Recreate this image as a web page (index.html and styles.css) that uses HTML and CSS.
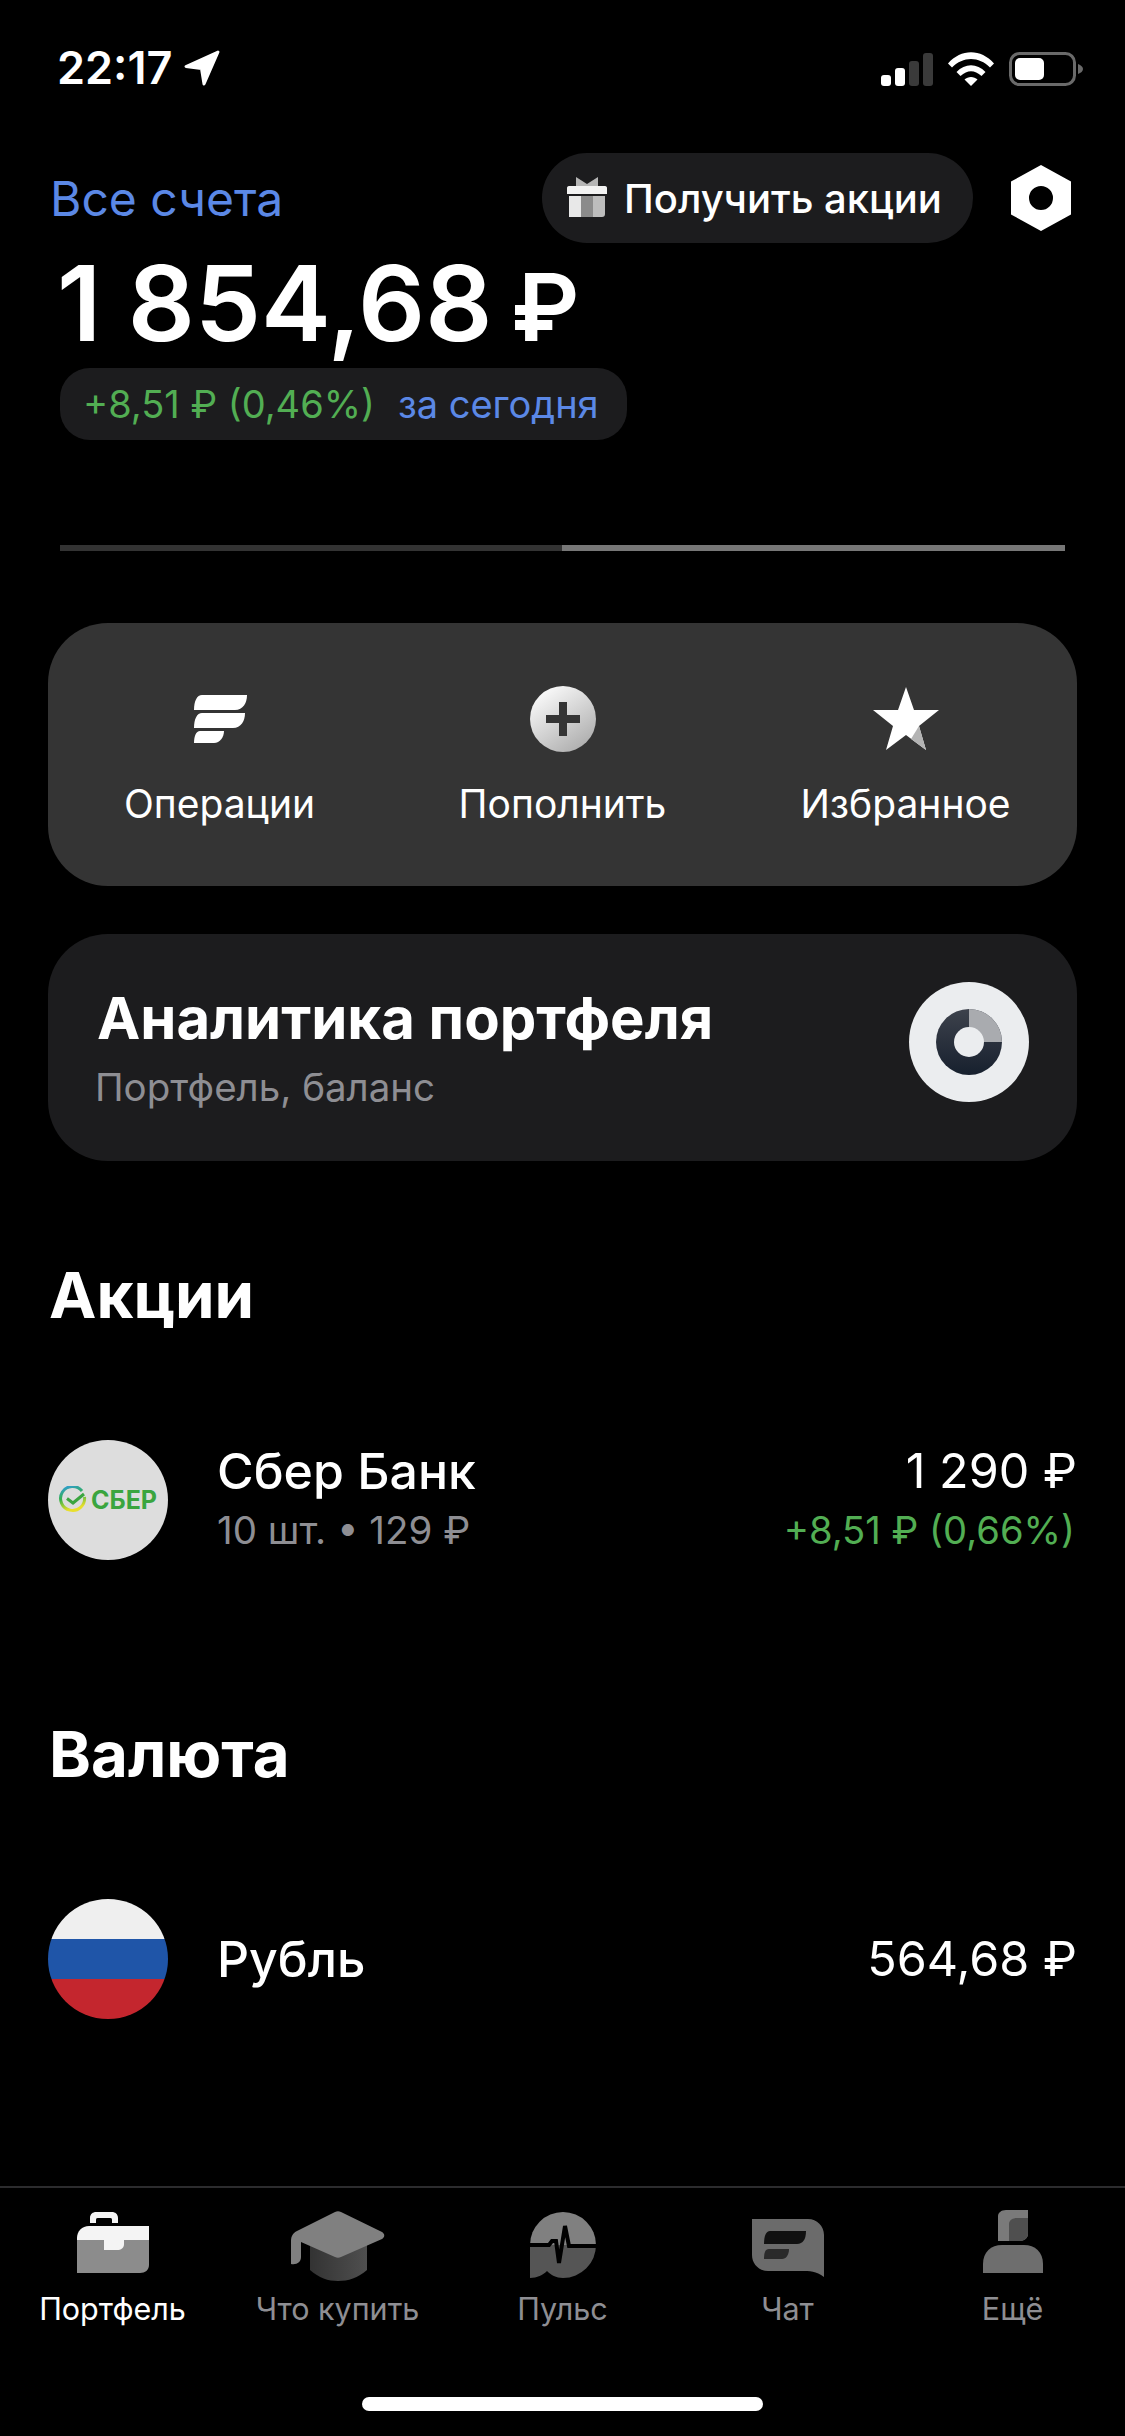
FILE: index.html
```html
<!DOCTYPE html>
<html lang="ru">
<head>
    <meta charset="UTF-8">
    <meta name="viewport" content="width=device-width, initial-scale=1.0">
    <title>Портфель</title>
    <link rel="stylesheet" href="styles.css">
</head>
<body>
    <div class="screen">
        <header class="status">
            <div class="status-left">
                <span class="time">22:17</span>
                <svg class="loc" width="36" height="36" viewBox="0 0 36 36"><path d="M34 2 2 16.500 17.500 18.500 20 34Z" fill="#fff" stroke="#fff" stroke-width="3" stroke-linejoin="round"/></svg>
            </div>
            <div class="status-right">
                <svg width="52" height="33" viewBox="0 0 52 33">
                    <rect x="0" y="22" width="10" height="11" rx="3" fill="#fff"/>
                    <rect x="14" y="15" width="10" height="18" rx="3" fill="#fff"/>
                    <rect x="28" y="8" width="10" height="25" rx="3" fill="#3a3a3a"/>
                    <rect x="42" y="0" width="10" height="33" rx="3" fill="#3a3a3a"/>
                </svg>
                <svg width="46" height="34" viewBox="0 0 46 34">
                    <path d="M0 11.500C13 -3.500 33 -3.500 46 11.500L42 15.500C31 4 15 4 4 15.500Z" fill="#fff"/>
                    <path d="M8.500 20C17 11 29 11 37.500 20L33.500 24C26.500 17.500 19.500 17.500 12.500 24Z" fill="#fff"/>
                    <path d="M16.500 27.500C20 24 26 24 29.500 27.500L23 34Z" fill="#fff"/>
                </svg>
                <svg width="74" height="34" viewBox="0 0 74 34">
                    <rect x="1.500" y="1.500" width="64" height="31" rx="9" fill="none" stroke="#6a6a6a" stroke-width="3"/>
                    <rect x="6" y="6" width="29" height="22" rx="5" fill="#fff"/>
                    <path d="M69 12C72 13 74 15 74 17C74 19 72 21 69 22Z" fill="#6a6a6a"/>
                </svg>
            </div>
        </header>

        <section class="account">
            <div class="account-top">
                <span class="account-name">Все счета</span>
                <div class="account-actions">
                    <div class="promo">
                        <svg width="42" height="42" viewBox="0 0 42 42">
                            <path d="M10 0 21 7 32 0V9H10Z" fill="#b5b5b5"/>
                            <path d="M3 9C1.500 9 1 10 1 11V17H41V11C41 10 40.500 9 39 9Z" fill="#f2f2f2"/>
                            <path d="M3 19H15V40H3Z" fill="#e8e8e8"/>
                            <path d="M27 19H39V37C39 39 38 40 36 40H27Z" fill="#bdbdbd"/>
                            <path d="M15 19H27V40H15Z" fill="#8b8b8b"/>
                        </svg>
                        <span>Получить акции</span>
                    </div>
                    <svg width="62" height="66" viewBox="0 0 62 66"><path fill-rule="evenodd" d="M31 0 61 16.500V49.500L31 66 1 49.500V16.500ZM31 21A12 12 0 1 0 31 45 12 12 0 1 0 31 21Z" fill="#fff"/></svg>
                </div>
            </div>
            <div class="amount">1 854,68<span class="amount-sign"> ₽</span></div>
            <div class="change"><span class="green">+8,51 ₽ (0,46%)</span><span class="blue">за сегодня</span></div>
            <div class="progress"><div class="progress-dark"></div><div class="progress-light"></div></div>
        </section>

        <section class="actions">
            <div class="action">
                <svg width="70" height="70" viewBox="0 0 70 70">
                    <path d="M17 11H62C62 19 58 26 50 26H9C9 17 12 11 17 11Z" fill="#fff"/>
                    <path d="M17 29H60C60 37 56 44 48 44H9C9 35 12 29 17 29Z" fill="#fff"/>
                    <path d="M15 47H39C39 53 35 59 29 59H9C9 52 11 47 15 47Z" fill="#fff"/>
                </svg>
                <span>Операции</span>
            </div>
            <div class="action">
                <svg width="70" height="70" viewBox="0 0 70 70">
                    <defs><linearGradient id="plusFill" x1="0.150" y1="0" x2="0.850" y2="1"><stop offset="0" stop-color="#fff"/><stop offset="1" stop-color="#a9a9a9"/></linearGradient></defs>
                    <circle cx="35" cy="35" r="33" fill="url(#plusFill)"/>
                    <path d="M31 18H39V31H52V39H39V52H31V39H18V31H31Z" fill="#343434"/>
                </svg>
                <span>Пополнить</span>
            </div>
            <div class="action">
                <svg width="70" height="70" viewBox="0 0 70 70">
                    <path d="M35 3 43 26H68L48 42 55 66 35 51 15 66 22 42 2 26H27Z" fill="#fff"/>
                    <path d="M48 42 55 66 40 55Z" fill="#b3b3b3"/>
                </svg>
                <span>Избранное</span>
            </div>
        </section>

        <section class="analytics">
            <div class="analytics-text">
                <div class="analytics-title">Аналитика портфеля</div>
                <div class="analytics-sub">Портфель, баланс</div>
            </div>
            <svg class="analytics-icon" width="120" height="120" viewBox="0 0 120 120">
                <defs><linearGradient id="donut" x1="0" y1="0" x2="0" y2="1"><stop offset="0" stop-color="#3d424c"/><stop offset="1" stop-color="#17202e"/></linearGradient></defs>
                <circle cx="60" cy="60" r="60" fill="#ebedef"/>
                <circle cx="60" cy="60" r="33" fill="url(#donut)"/>
                <path d="M60 27A33 33 0 0 1 93 60H60Z" fill="#a9abaf"/>
                <circle cx="60" cy="60" r="15" fill="#ebedef"/>
            </svg>
        </section>

        <section class="group">
            <h2>Акции</h2>
            <div class="row">
                <div class="logo sber">
                    <svg width="28" height="28" viewBox="0 0 28 28">
                        <defs><linearGradient id="sberRing" x1="0" y1="0" x2="0.300" y2="1"><stop offset="0" stop-color="#2f9be0"/><stop offset="0.500" stop-color="#35b04a"/><stop offset="1" stop-color="#e8df2c"/></linearGradient></defs>
                        <path d="M23 5A12 12 0 1 0 25.500 11" fill="none" stroke="url(#sberRing)" stroke-width="3"/>
                        <path d="M8 12.500 14 17 25 8" fill="none" stroke="#3aa53f" stroke-width="3"/>
                    </svg>
                    <span>СБЕР</span>
                </div>
                <div class="row-main row-stack">
                    <div class="row-name">Сбер Банк</div>
                    <div class="row-sub">10 шт. • 129 ₽</div>
                </div>
                <div class="row-side row-stack">
                    <div class="row-price">1 290 ₽</div>
                    <div class="row-change green">+8,51 ₽ (0,66%)</div>
                </div>
            </div>
        </section>

        <section class="group group-currency">
            <h2>Валюта</h2>
            <div class="row">
                <div class="logo flag"></div>
                <div class="row-main"><div class="row-name">Рубль</div></div>
                <div class="row-side"><div class="row-price">564,68 ₽</div></div>
            </div>
        </section>

        <nav class="tabs">
            <div class="tab tab-active">
                <svg width="90" height="76" viewBox="0 0 90 76">
                    <path d="M22 15V10C22 6 25 4 28 4H44C47 4 50 6 50 10V15H44V12C44 10 43 10 41 10H31C29 10 28 10 28 12V15Z" fill="#f4f4f4"/>
                    <path d="M21 18H81V32H9V30C9 23 14 18 21 18Z" fill="#f4f4f4"/>
                    <path d="M9 32H81V57C81 62 77 65 72 65H9Z" fill="#8c8c8c"/>
                    <path d="M36 32H56V36C56 40 53 42 49 42H36Z" fill="#f4f4f4"/>
                </svg>
                <span>Портфель</span>
            </div>
            <div class="tab">
                <svg width="96" height="76" viewBox="0 0 96 76">
                    <defs><linearGradient id="capBase" x1="0" y1="0" x2="1" y2="0"><stop offset="0" stop-color="#333"/><stop offset="1" stop-color="#4f4f4f"/></linearGradient></defs>
                    <path d="M20 33H77V62C68 70 58 73 48 73C38 73 29 70 20 62Z" fill="url(#capBase)"/>
                    <path d="M45 4C47 3 49 3 51 4L92 24C95 26 95 29 92 31L51 49C49 50 47 50 45 49L11 34V49C11 54 7 57 1 56V33C1 28 3 25 7 23Z" fill="#808080"/>
                </svg>
                <span>Что купить</span>
            </div>
            <div class="tab">
                <svg width="70" height="76" viewBox="0 0 70 76">
                    <path d="M2 37A33 33 0 0 1 68 37Z" fill="#808080"/>
                    <path d="M2 37H68A33 33 0 0 1 35 70C28 70 23 67 19 63C15 67 9 70 2 70Z" fill="#555"/>
                    <path d="M0 37H21L24 33H28L31 55 37 18 41 38H70" fill="none" stroke="#000" stroke-width="4"/>
                </svg>
                <span>Пульс</span>
            </div>
            <div class="tab">
                <svg width="74" height="76" viewBox="0 0 74 76">
                    <path d="M1 11H57C66 11 73 18 73 27V69C65 63 59 63 50 63H17C8 63 1 56 1 47Z" fill="#6b6b6b"/>
                    <path d="M19 23H55C55 31 52 36 46 36H13C13 28 15 23 19 23Z" fill="#111"/>
                    <path d="M18 41H38C38 47 35 51 31 51H13C13 45 14 41 18 41Z" fill="#2a2a2a"/>
                </svg>
                <span>Чат</span>
            </div>
            <div class="tab">
                <svg width="62" height="76" viewBox="0 0 62 76">
                    <path d="M16 8C16 5 19 2 24 2H46V26C46 30 42 33 38 33H16Z" fill="#7a7a7a"/>
                    <path d="M27 16C27 12 31 10 35 10H46V26C46 30 42 33 38 33H27Z" fill="#4f4f4f"/>
                    <path d="M1 65V56C1 44 9 37 20 37H42C53 37 61 44 61 56V65Z" fill="#6e6e6e"/>
                </svg>
                <span>Ещё</span>
            </div>
        </nav>
        <div class="home-bar"><div class="home-indicator"></div></div>
    </div>
</body>
</html>
```

FILE: styles.css
```css
* {
    box-sizing: border-box;
}

body {
    margin: 0;
    background: #000;
    color: #fff;
    font-family: Inter, "Noto Sans", sans-serif;
}

.screen {
    width: 1125px;
    height: 2436px;
    overflow: hidden;
    display: flex;
    flex-direction: column;
}

.green {
    color: #52ae53;
}

.blue {
    color: #5b88e6;
}

/* status bar */
.status {
    height: 153px;
    padding: 46px 42px 0 57px;
    display: flex;
    justify-content: space-between;
    align-items: flex-start;
}

.status-left {
    display: flex;
    align-items: center;
    gap: 12px;
}

.time {
    font-size: 45px;
    line-height: 44px;
    font-weight: 600;
}

.status-right {
    display: flex;
    align-items: center;
    gap: 15px;
    padding-top: 6px;
}

/* account block */
.account {
    display: flex;
    flex-direction: column;
}

.account-top {
    height: 90px;
    padding: 0 53px 0 50px;
    display: flex;
    justify-content: space-between;
    align-items: center;
}

.account-name {
    font-size: 48px;
    color: #5b88e6;
}

.account-actions {
    display: flex;
    align-items: center;
    gap: 37px;
}

.promo {
    width: 431px;
    height: 90px;
    border-radius: 45px;
    background: #1c1c1e;
    padding-left: 24px;
    display: flex;
    align-items: center;
    gap: 16px;
    font-size: 40px;
    font-weight: 500;
}

.amount {
    margin-top: 8px;
    height: 108px;
    padding-left: 57px;
    font-size: 105px;
    line-height: 104px;
    font-weight: 600;
}

.amount-sign {
    font-size: 94px;
    word-spacing: -5px;
}

.change {
    margin: 9px 0 0 60px;
    width: 567px;
    height: 72px;
    border-radius: 30px;
    background: #1c1c1e;
    padding-left: 23px;
    display: flex;
    align-items: center;
    gap: 23px;
    font-size: 38px;
}

.progress {
    margin: 105px 60px 0;
    height: 6px;
    display: flex;
}

.progress-dark {
    width: 502px;
    background: #333;
}

.progress-light {
    flex: 1;
    background: #777;
}

/* quick actions */
.actions {
    margin: 72px 48px 0;
    height: 263px;
    border-radius: 60px;
    background: #343434;
    display: grid;
    grid-template-columns: repeat(3, 343px);
}

.action {
    padding-top: 61px;
    display: flex;
    flex-direction: column;
    align-items: center;
    gap: 26px;
    font-size: 39px;
}

/* analytics */
.analytics {
    margin: 48px 48px 0;
    height: 227px;
    border-radius: 60px;
    background: #1c1c1e;
    padding: 0 48px 0 49px;
    display: flex;
    justify-content: space-between;
    align-items: center;
}

.analytics-title {
    font-size: 58px;
    line-height: 66px;
    font-weight: 700;
}

.analytics-sub {
    margin-top: 13px;
    margin-left: -2px;
    font-size: 38.500px;
    line-height: 46px;
    color: #8e8e93;
}

.analytics-icon {
    margin-bottom: 12px;
}

/* lists */
.group {
    padding: 0 48px 0 48px;
}

.group h2 {
    margin: 96px 0 0 1px;
    font-size: 63.500px;
    line-height: 76px;
    font-weight: 700;
}

.group-currency h2 {
    margin-top: 156px;
}

.row {
    margin-top: 107px;
    height: 120px;
    display: flex;
    align-items: center;
}

.logo {
    width: 120px;
    height: 120px;
    border-radius: 50%;
    flex-shrink: 0;
}

.sber {
    background: #dddddd;
    display: flex;
    align-items: center;
    justify-content: center;
    gap: 4px;
    color: #3aa53f;
    font-size: 25px;
    font-weight: 700;
}

.flag {
    background: linear-gradient(#efefef 0 33.4%, #1f55a8 33.4% 66.7%, #c4262e 66.7%);
}

.row-main {
    margin-left: 49px;
    flex: 1;
}

.row-stack {
    padding-bottom: 5px;
}

.row-name {
    font-size: 50px;
    line-height: 58px;
    font-weight: 500;
}

.row-sub,
.row-change {
    margin-top: 7px;
    font-size: 38.500px;
    line-height: 46px;
}

.row-change {
    font-size: 38.200px;
    padding-right: 2px;
}

.row-sub {
    color: #8e8e93;
}

.row-side {
    text-align: right;
}

.row-price {
    font-size: 48.500px;
    line-height: 58px;
}

/* bottom tabs */
.tabs {
    margin-top: auto;
    height: 169px;
    border-top: 2px solid #2c2c2e;
    display: grid;
    grid-template-columns: repeat(5, 225px);
}

.tab {
    padding-top: 20px;
    display: flex;
    flex-direction: column;
    align-items: center;
    color: #8e8e93;
    font-size: 30.500px;
    line-height: 38px;
}

.tab svg {
    margin-bottom: 6px;
}

.tab-active {
    color: #fff;
}

.home-bar {
    height: 81px;
    padding-top: 42px;
    display: flex;
    justify-content: center;
}

.home-indicator {
    width: 401px;
    height: 14px;
    border-radius: 7px;
    background: #fff;
}
```
